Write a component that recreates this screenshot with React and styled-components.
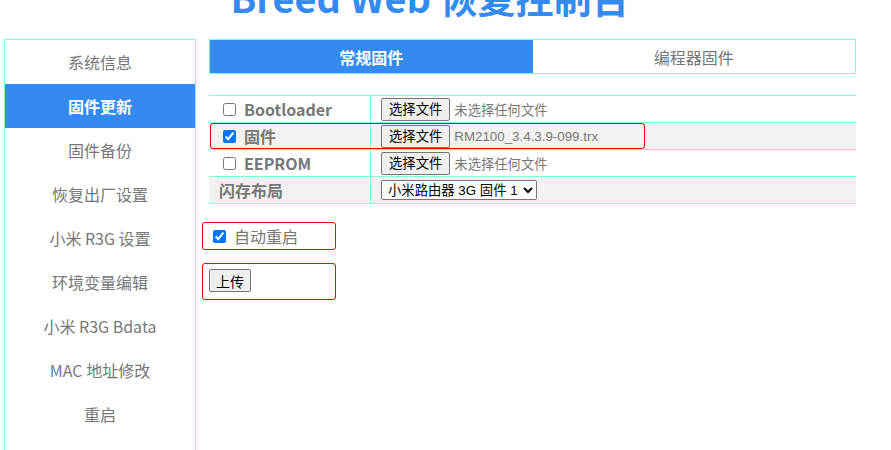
import React from 'react';
import styled, { createGlobalStyle } from 'styled-components';

const GlobalStyle = createGlobalStyle`
  body {
    margin: 0;
    background: #fff;
    font-family: "Noto Sans CJK SC", "Liberation Sans", sans-serif;
    overflow: hidden;
  }
`;

const BLUE = '#358af0';
const LINE = '#7fffd4';

const Page = styled.div`
  width: 852px;
  padding-left: 4px;
`;

const Title = styled.h1`
  margin: -22px 0 0;
  height: 38px;
  font-size: 38px;
  line-height: 38px;
  font-weight: 700;
  text-align: center;
  color: ${BLUE};
`;

const Body = styled.div`
  display: flex;
  align-items: flex-start;
  margin-top: 23px;
`;

const Sidebar = styled.nav`
  box-sizing: border-box;
  width: 192px;
  border: 1px solid ${LINE};
  border-bottom: none;
  padding-bottom: 30px;
`;

const NavItem = styled.div`
  height: 44px;
  line-height: 44px;
  text-align: center;
  font-size: 16px;
  color: ${({ $active }) => ($active ? '#fff' : '#777')};
  font-weight: ${({ $active }) => ($active ? 700 : 400)};
  background: ${({ $active }) => ($active ? BLUE : 'transparent')};
`;

const Main = styled.main`
  flex: 1;
  margin-left: 6px;
  display: flex;
  flex-direction: column;
`;

const Tabs = styled.div`
  display: flex;
  margin-left: 7px;
  height: 35px;
  box-sizing: border-box;
  border: 1px solid ${LINE};
`;

const Tab = styled.div`
  flex: 1;
  display: flex;
  align-items: center;
  justify-content: center;
  font-size: 16px;
  color: ${({ $active }) => ($active ? '#fff' : '#777')};
  font-weight: ${({ $active }) => ($active ? 700 : 400)};
  background: ${({ $active }) => ($active ? BLUE : '#fff')};
`;

const Table = styled.div`
  margin: 21px 0 0 7px;
  border-top: 1px solid ${LINE};
`;

const Row = styled.div`
  position: relative;
  display: flex;
  height: 27px;
  box-sizing: border-box;
  border-bottom: 1px solid ${LINE};
  background: ${({ $shade }) => ($shade ? '#f3f2f1' : '#fff')};
`;

const Highlight = styled.div`
  position: absolute;
  left: 1px;
  top: 0;
  width: 435px;
  height: 26px;
  box-sizing: border-box;
  border: 1px solid #f00;
  border-radius: 3px;
  pointer-events: none;
`;

const LabelCell = styled.label`
  box-sizing: border-box;
  width: 162px;
  display: flex;
  align-items: center;
  gap: 8px;
  padding-left: 10px;
  border-right: 1px solid ${LINE};
  font-size: 16px;
  font-weight: 700;
  color: #777;
`;

const ValueCell = styled.div`
  flex: 1;
  display: flex;
  align-items: center;
  padding-left: 10px;
`;

const Check = styled.input.attrs({ type: 'checkbox' })`
  width: 13px;
  height: 13px;
  margin: 0 0 0 4px;
`;

const NativeButton = styled.button`
  font-family: "Noto Sans CJK SC", sans-serif;
  font-size: 13.33px;
  color: #000;
  background: #efefef;
  border: 1px solid #767676;
  border-radius: 2px;
  padding: 1px 7px;
  height: 23px;
  line-height: 18px;
`;

const FileName = styled.span`
  margin-left: 4px;
  font-family: "Liberation Sans", "Noto Sans CJK SC", sans-serif;
  font-size: 13.33px;
  color: #777;
`;

const Select = styled.select`
  font-family: "Liberation Sans", "Noto Sans CJK SC", sans-serif;
  font-size: 13.33px;
  height: 20px;
  padding: 0 2px;
  color: #000;
  background: #fff;
  border: 1px solid #767676;
  border-radius: 2px;
`;

const Boxed = styled.div`
  box-sizing: border-box;
  width: 134px;
  height: ${({ $h }) => $h}px;
  margin-top: ${({ $top }) => $top}px;
  border: 1px solid #f00;
  border-radius: 3px;
  display: flex;
  align-items: ${({ $center }) => ($center ? 'center' : 'flex-start')};
  padding: ${({ $center }) => ($center ? '0 0 0 6px' : '5px 0 0 6px')};
`;

const BoxLabel = styled.label`
  display: flex;
  align-items: center;
  gap: 8px;
  font-size: 16px;
  color: #777;
`;

const UploadButton = styled(NativeButton)`
  font-size: 14px;
  padding: 1px 6px;
`;

const nav = [
  '系统信息',
  '固件更新',
  '固件备份',
  '恢复出厂设置',
  '小米 R3G 设置',
  '环境变量编辑',
  '小米 R3G Bdata',
  'MAC 地址修改',
  '重启',
];

const files = [
  { label: 'Bootloader', checked: false, file: '未选择任何文件' },
  { label: '固件', checked: true, file: 'RM2100_3.4.3.9-099.trx', mark: true },
  { label: 'EEPROM', checked: false, file: '未选择任何文件' },
];

export default function App() {
  return (
    <Page>
      <GlobalStyle />
      <Title>Breed Web 恢复控制台</Title>
      <Body>
        <Sidebar>
          {nav.map((item) => (
            <NavItem key={item} $active={item === '固件更新'}>
              {item}
            </NavItem>
          ))}
        </Sidebar>
        <Main>
          <Tabs>
            <Tab $active>常规固件</Tab>
            <Tab>编程器固件</Tab>
          </Tabs>
          <Table>
            {files.map((f, i) => (
              <Row key={f.label} $shade={i % 2 === 1}>
                <LabelCell>
                  <Check defaultChecked={f.checked} />
                  {f.label}
                </LabelCell>
                <ValueCell>
                  <NativeButton>选择文件</NativeButton>
                  <FileName>{f.file}</FileName>
                </ValueCell>
                {f.mark && <Highlight />}
              </Row>
            ))}
            <Row $shade>
              <LabelCell as="div">闪存布局</LabelCell>
              <ValueCell>
                <Select defaultValue="r3g1">
                  <option value="r3g1">小米路由器 3G 固件 1</option>
                  <option value="r3g2">小米路由器 3G 固件 2</option>
                </Select>
              </ValueCell>
            </Row>
          </Table>
          <Boxed $h={28} $top={18} $center>
            <BoxLabel>
              <Check defaultChecked />
              自动重启
            </BoxLabel>
          </Boxed>
          <Boxed $h={37} $top={13}>
            <UploadButton>上传</UploadButton>
          </Boxed>
        </Main>
      </Body>
    </Page>
  );
}
